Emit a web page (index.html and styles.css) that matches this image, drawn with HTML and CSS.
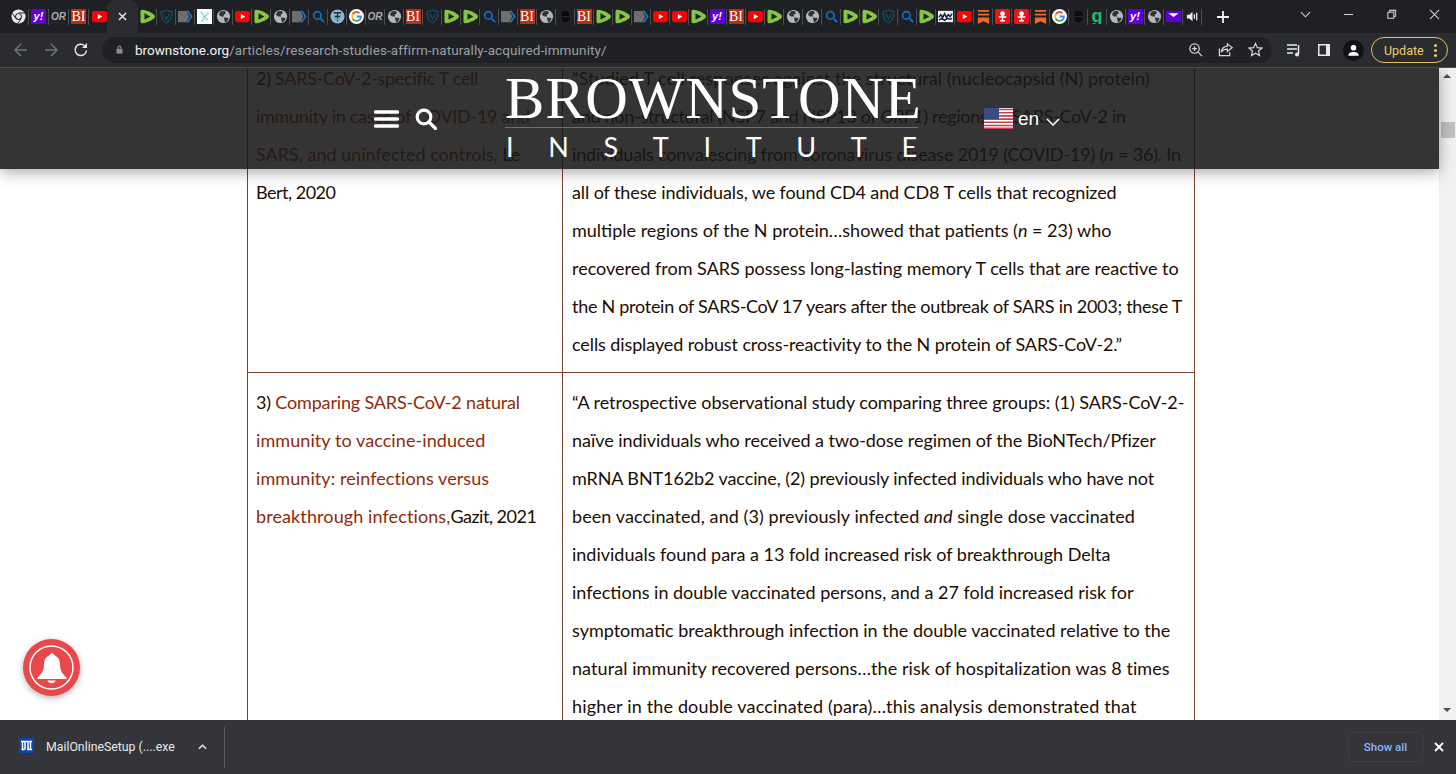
FILE: index.html
```html
<!DOCTYPE html>
<html lang="en">
<head>
<meta charset="utf-8">
<title>Research Studies Affirm Naturally Acquired Immunity</title>
<link rel="stylesheet" href="styles.css">
</head>
<body>
<svg class="defs" width="0" height="0" aria-hidden="true">
  <symbol id="chrome" viewBox="0 0 16 16"><circle cx="8" cy="8" r="7.5" fill="#e8eaed"/><circle cx="8" cy="8" r="3.6" fill="#202124"/><circle cx="8" cy="8" r="2.6" fill="#e8eaed"/><path d="M8 4.2H15M5 10 1.5 4.5M10.8 10.5 7 15.5" stroke="#202124" stroke-width="1"/></symbol>
  <symbol id="yt" viewBox="0 0 16 16"><rect y="2" width="16" height="12" rx="2.500" fill="#f00"/><path d="M6.200 5.200 11 8l-4.800 2.800z" fill="#fff"/></symbol>
  <symbol id="rumble" viewBox="0 0 16 16"><path d="M2.500 .8C1.500 .8.500 1.500.500 2.800v10.400c0 1.300 1 2.100 2.300 2C6.500 14.800 11.500 12.800 14.800 10.200c1.500-1.200 1.500-3.200 0-4.400C11.500 3.200 6.500 1 2.500.8z" fill="#85c742"/><path d="M4.800 4.600 11 8l-6.200 3.400z" fill="#202124"/></symbol>
  <symbol id="shield" viewBox="0 0 16 16"><path d="M2 3c2 0 3.500-.5 6-2 2.500 1.500 4 2 6 2 0 5.500-2 9.500-6 12C4 12.500 2 8.500 2 3z" fill="none" stroke="#14506b" stroke-width="1.300"/><path d="M5 5l3 6 3-6" fill="none" stroke="#14506b" stroke-width="1.100"/></symbol>
  <symbol id="tag" viewBox="0 0 16 16"><path d="M0 2h9l3 6-3 6H0z" fill="#6c6e72"/><path d="M10 1.500 14.500 8 10 14.500" fill="none" stroke="#1a73c9" stroke-width="1.800"/></symbol>
  <symbol id="cross" viewBox="0 0 16 16"><rect width="16" height="16" fill="#fff"/><path d="M4 3l8 10M12 4 5 13" stroke="#71cfc4" stroke-width="2" stroke-dasharray="1.500 1"/></symbol>
  <symbol id="globe" viewBox="0 0 16 16"><circle cx="8" cy="8" r="7" fill="#b4b8bd"/><path d="M5 2.500 9.500 2l1 2.500L8 6.500 8.800 8 5.500 8 3 6zM8.500 9l5 .5L12 13l-2.500 1.500z" fill="#303134"/></symbol>
  <symbol id="search" viewBox="0 0 16 16"><circle cx="6.800" cy="6.800" r="4" fill="none" stroke="#0f71c9" stroke-width="1.800"/><path d="m10 10 4 4" stroke="#0f71c9" stroke-width="2"/></symbol>
  <symbol id="tglobe" viewBox="0 0 16 16"><circle cx="8" cy="8" r="7.500" fill="#8ab4d8"/><path d="M4 4h8M8 4v9M5 8h6" stroke="#1e3a2a" stroke-width="1.400"/><path d="M5 11h6" stroke="#58c26a" stroke-width="1.400"/></symbol>
  <symbol id="google" viewBox="0 0 16 16"><circle cx="8" cy="8" r="8" fill="#fff"/><path d="M4 5.600A4.800 4.800 0 0 1 11.200 4.400" fill="none" stroke="#ea4335" stroke-width="1.900"/><path d="M4 10.400a4.800 4.800 0 0 1 0-4.800" fill="none" stroke="#fbbc05" stroke-width="1.900"/><path d="M11.300 11.500A4.800 4.800 0 0 1 4 10.400" fill="none" stroke="#34a853" stroke-width="1.900"/><path d="M8.200 8h4.500a4.800 4.800 0 0 1-1.400 3.500" fill="none" stroke="#4285f4" stroke-width="1.900"/></symbol>
  <symbol id="dim" viewBox="0 0 16 16"><rect x="3" y="1" width="10" height="14" rx="5" fill="#0c0c0d" stroke="#2b2c2f"/><path d="M3.500 8h9" stroke="#2b2c2f"/></symbol>
  <symbol id="mail" viewBox="0 0 16 16"><rect y="2" width="16" height="12" fill="#5f01d1"/><path d="M2.500 4.500h11L8 8.500z" fill="#fff"/></symbol>
  <symbol id="wave" viewBox="0 0 16 16"><rect y="2" width="16" height="12" fill="#f1f3f4"/><path d="M1 9l2-3 2 3 2-4 2 4 2-3 2 2 2-3M1 12l3-2 3 2 3-2 3 1 2-1" fill="none" stroke="#12204a" stroke-width="1.600"/></symbol>
  <symbol id="mark" viewBox="0 0 16 16"><path d="M2 1h12v2H2zM2 5h12v2H2z" fill="#f26a21"/><path d="M2 9h12v7l-6-3-6 3z" fill="#f26a21"/></symbol>
  <symbol id="alert" viewBox="0 0 16 16"><rect width="16" height="16" rx="2" fill="#e8131b"/><circle cx="8" cy="5" r="2.500" fill="#fff"/><path d="M4 8.500h8M8 7v6M5.500 12.500h5" stroke="#fff" stroke-width="1.600"/></symbol>
  <symbol id="speak" viewBox="0 0 16 16"><path d="M2 6h2.500L8 3v10L4.500 10H2z" fill="#e8eaed"/><path d="M10 5.500v5M12.500 4v8" stroke="#e8eaed" stroke-width="1.400"/></symbol>
</svg>

<header class="chrome">
  <div class="tabstrip">
    <div class="tabs">
      <span class="tab lead"><svg class="fav"><use href="#chrome"/></svg></span>
      <span class="tab lead"><span class="lt yahoo">y!</span></span>
      <span class="tab lead"><span class="lt or">OR</span></span>
      <span class="tab lead"><span class="lt bi">BI</span></span>
      <span class="tab lead last"><svg class="fav"><use href="#yt"/></svg></span>
      <span class="tab-active"><svg class="tab-x" viewBox="0 0 10 10"><path d="m1 1 8 8M9 1 1 9"/></svg></span>
      <span class="tab"><svg class="fav"><use href="#rumble"/></svg></span>
      <span class="tab"><svg class="fav"><use href="#shield"/></svg></span>
      <span class="tab"><svg class="fav"><use href="#tag"/></svg></span>
      <span class="tab"><svg class="fav"><use href="#cross"/></svg></span>
      <span class="tab"><svg class="fav"><use href="#globe"/></svg></span>
      <span class="tab"><svg class="fav"><use href="#yt"/></svg></span>
      <span class="tab"><svg class="fav"><use href="#rumble"/></svg></span>
      <span class="tab"><svg class="fav"><use href="#globe"/></svg></span>
      <span class="tab"><svg class="fav"><use href="#tag"/></svg></span>
      <span class="tab"><svg class="fav"><use href="#search"/></svg></span>
      <span class="tab"><svg class="fav"><use href="#tglobe"/></svg></span>
      <span class="tab"><svg class="fav"><use href="#google"/></svg></span>
      <span class="tab"><span class="lt or">OR</span></span>
      <span class="tab"><svg class="fav"><use href="#globe"/></svg></span>
      <span class="tab"><span class="lt bi">BI</span></span>
      <span class="tab"><svg class="fav"><use href="#shield"/></svg></span>
      <span class="tab"><svg class="fav"><use href="#rumble"/></svg></span>
      <span class="tab"><svg class="fav"><use href="#rumble"/></svg></span>
      <span class="tab"><svg class="fav"><use href="#search"/></svg></span>
      <span class="tab"><svg class="fav"><use href="#tag"/></svg></span>
      <span class="tab"><span class="lt bi">BI</span></span>
      <span class="tab"><svg class="fav"><use href="#globe"/></svg></span>
      <span class="tab"><svg class="fav"><use href="#dim"/></svg></span>
      <span class="tab"><span class="lt bi">BI</span></span>
      <span class="tab"><svg class="fav"><use href="#rumble"/></svg></span>
      <span class="tab"><svg class="fav"><use href="#rumble"/></svg></span>
      <span class="tab"><svg class="fav"><use href="#tag"/></svg></span>
      <span class="tab"><svg class="fav"><use href="#yt"/></svg></span>
      <span class="tab"><svg class="fav"><use href="#yt"/></svg></span>
      <span class="tab"><svg class="fav"><use href="#rumble"/></svg></span>
      <span class="tab"><span class="lt yahoo">y!</span></span>
      <span class="tab"><span class="lt bi">BI</span></span>
      <span class="tab"><svg class="fav"><use href="#yt"/></svg></span>
      <span class="tab"><svg class="fav"><use href="#rumble"/></svg></span>
      <span class="tab"><svg class="fav"><use href="#globe"/></svg></span>
      <span class="tab"><svg class="fav"><use href="#globe"/></svg></span>
      <span class="tab"><svg class="fav"><use href="#search"/></svg></span>
      <span class="tab"><svg class="fav"><use href="#rumble"/></svg></span>
      <span class="tab"><svg class="fav"><use href="#rumble"/></svg></span>
      <span class="tab"><svg class="fav"><use href="#shield"/></svg></span>
      <span class="tab"><svg class="fav"><use href="#search"/></svg></span>
      <span class="tab"><svg class="fav"><use href="#rumble"/></svg></span>
      <span class="tab"><svg class="fav"><use href="#wave"/></svg></span>
      <span class="tab"><svg class="fav"><use href="#yt"/></svg></span>
      <span class="tab"><svg class="fav"><use href="#mark"/></svg></span>
      <span class="tab"><svg class="fav"><use href="#alert"/></svg></span>
      <span class="tab"><svg class="fav"><use href="#alert"/></svg></span>
      <span class="tab"><svg class="fav"><use href="#mark"/></svg></span>
      <span class="tab"><svg class="fav"><use href="#google"/></svg></span>
      <span class="tab"><svg class="fav"><use href="#dim"/></svg></span>
      <span class="tab"><span class="lt gram">g</span></span>
      <span class="tab"><svg class="fav"><use href="#globe"/></svg></span>
      <span class="tab"><span class="lt yahoo">y!</span></span>
      <span class="tab"><svg class="fav"><use href="#globe"/></svg></span>
      <span class="tab"><svg class="fav"><use href="#mail"/></svg></span>
      <span class="tab"><svg class="fav"><use href="#speak"/></svg></span>
      <svg class="newtab" viewBox="0 0 12 12"><path d="M6 0v12M0 6h12"/></svg>
    </div>
    <div class="winctl">
      <svg class="win-ico" viewBox="0 0 12 12"><path d="m1 3.500 5 5 5-5"/></svg>
      <svg class="win-ico" viewBox="0 0 12 12"><path d="M1 6h10"/></svg>
      <svg class="win-ico" viewBox="0 0 12 12"><path d="M2 3.500h6.500V10H2zM4 3.500V1.500h6.500V8H8.500"/></svg>
      <svg class="win-ico" viewBox="0 0 12 12"><path d="m1 1 10 10M11 1 1 11"/></svg>
    </div>
  </div>
  <div class="toolbar">
    <svg class="nav dim" viewBox="0 0 16 16"><path d="M14 8H2M8 2 2 8l6 6"/></svg>
    <svg class="nav dim" viewBox="0 0 16 16"><path d="M2 8h12M8 2l6 6-6 6"/></svg>
    <svg class="nav" viewBox="0 0 16 16"><path d="M13.500 8.500A5.700 5.700 0 1 1 11.500 3.500"/><path class="fill" d="M14 1v5H9z"/></svg>
    <div class="omnibox">
      <svg class="lock" viewBox="0 0 12 12"><path d="M2 5h8v6.500H2z"/><path class="ring" d="M4 5V3.500a2 2 0 0 1 4 0V5"/></svg>
      <span class="url"><b>brownstone.org</b>/articles/research-studies-affirm-naturally-acquired-immunity/</span>
      <span class="omni-spacer"></span>
      <svg class="omni-ico" viewBox="0 0 16 16"><circle cx="7" cy="7" r="5"/><path d="m11 11 4 4M7 4.500v5M4.500 7h5"/></svg>
      <svg class="omni-ico" viewBox="0 0 16 16"><path d="M10 2l5 4-5 4V7.500C6.500 7.500 4.500 9 3.500 11 3.800 7.500 6 5 10 4.500zM1.500 7v7.500h11V11"/></svg>
      <svg class="omni-ico" viewBox="0 0 16 16"><path d="m8 1.500 2 4.500 4.800.5-3.600 3.200 1 4.800L8 12l-4.200 2.500 1-4.800L1.200 6.500 6 6z"/></svg>
    </div>
    <svg class="tool-ico" viewBox="0 0 16 16"><path class="s" d="M1 3h10M1 7h10M1 11h6"/><path class="s" d="M12.500 3v9"/><circle class="f" cx="11" cy="12.500" r="2"/></svg>
    <svg class="tool-ico" viewBox="0 0 16 16"><rect class="f" x="2" y="2" width="12" height="12"/><rect x="3.500" y="3.500" width="6.500" height="9" fill="#2b2c30"/></svg>
    <span class="avatar"><svg viewBox="0 0 16 16"><circle cx="8" cy="5" r="3" fill="#fff"/><path d="M2.500 13.500c0-3 2.500-4 5.500-4s5.500 1 5.500 4z" fill="#fff"/></svg></span>
    <span class="update">Update<span class="dots"><i></i><i></i><i></i></span></span>
  </div>
</header>

<main class="viewport">
  <div class="site-header">
    <svg class="burger" viewBox="0 0 25 18"><path d="M1.500 2h22M1.500 9h22M1.500 16h22"/></svg>
    <svg class="magnify" viewBox="0 0 22 22"><circle cx="9" cy="9" r="6.800"/><path d="m14 14 6.500 6.500"/></svg>
    <div class="logo">
      <div class="logo-top">BROWNSTONE</div>
      <div class="logo-sub"><span>I</span><span>N</span><span>S</span><span>T</span><span>I</span><span>T</span><span>U</span><span>T</span><span>E</span></div>
    </div>
    <svg class="flag" viewBox="0 0 29 21">
      <rect width="29" height="21" fill="#fff"/>
      <path d="M0 1.500h29M0 4.700h29M0 7.900h29M0 11.100h29M0 14.300h29M0 17.500h29M0 20.300h29" stroke="#c5404e" stroke-width="1.600"/>
      <rect width="15" height="11" fill="#3c4a86"/>
    </svg>
    <span class="lang">en</span>
    <svg class="lang-chev" viewBox="0 0 14 8"><path d="m1 1 6 6 6-6"/></svg>
  </div>

  <div class="article">
    <table class="studies">
      <tr>
        <td class="c1"><span class="ln n3">2) <a>SARS-CoV-2-specific T cell</a></span><span class="ln n3"><a>immunity in cases of COVID-19 and</a></span><span class="ln"><a>SARS, and uninfected controls,</a> Le</span><span class="ln n4">Bert, 2020</span></td>
        <td class="c2"><span class="ln p1">“Studied T cell responses against the structural (nucleocapsid (N) protein)</span><span class="ln n3">and non-structural (NSP7 and NSP13 of <i>ORF1</i>) regions of SARS-CoV-2 in</span><span class="ln n2">individuals convalescing from coronavirus disease 2019 (COVID-19) (<i>n</i> = 36). In</span><span class="ln n1">all of these individuals, we found CD4 and CD8 T cells that recognized</span><span class="ln">multiple regions of the N protein…showed that patients (<i>n</i> = 23) who</span><span class="ln">recovered from SARS possess long-lasting memory T cells that are reactive to</span><span class="ln n3">the N protein of SARS-CoV 17 years after the outbreak of SARS in 2003; these T</span><span class="ln n1">cells displayed robust cross-reactivity to the N protein of SARS-CoV-2.”</span></td>
      </tr>
      <tr>
        <td class="c1"><span class="ln n2">3) <a>Comparing SARS-CoV-2 natural</a></span><span class="ln p1"><a>immunity to vaccine-induced</a></span><span class="ln p1"><a>immunity: reinfections versus</a></span><span class="ln n4"><a class="p3">breakthrough infections,</a>Gazit, 2021</span></td>
        <td class="c2"><span class="ln n0">“A retrospective observational study comparing three groups: (1) SARS-CoV-2-</span><span class="ln n0">naïve individuals who received a two-dose regimen of the BioNTech/Pfizer</span><span class="ln n1">mRNA BNT162b2 vaccine, (2) previously infected individuals who have not</span><span class="ln p1">been vaccinated, and (3) previously infected <i>and</i> single dose vaccinated</span><span class="ln">individuals found para a 13 fold increased risk of breakthrough Delta</span><span class="ln">infections in double vaccinated persons, and a 27 fold increased risk for</span><span class="ln">symptomatic breakthrough infection in the double vaccinated relative to the</span><span class="ln p1">natural immunity recovered persons…the risk of hospitalization was 8 times</span><span class="ln p2">higher in the double vaccinated (para)…this analysis demonstrated that</span><span class="ln">natural immunity</span></td>
      </tr>
    </table>
  </div>

  <div class="scrollbar">
    <span class="arrow up"></span>
    <span class="thumb"></span>
    <span class="arrow down"></span>
  </div>

  <div class="bell">
    <svg viewBox="0 0 57 57"><circle cx="28.500" cy="28.500" r="21.500" class="bell-ring"/><path class="bell-body" d="M28.500 14c1.500 0 2.500 1 2.500 2.200 4.500 1.300 6 5 6 9.800 0 5 2 8.500 6.500 12.500v1.500h-29v-1.500c4.500-4 6.500-7.500 6.500-12.500 0-4.800 1.500-8.500 6-9.800 0-1.200 1-2.200 2.500-2.200z"/><path class="bell-body" d="M24.500 41.500h8c-.5 1.800-2 2.800-4 2.800s-3.500-1-4-2.800z"/></svg>
  </div>
</main>

<footer class="downloads">
  <svg class="dl-file" viewBox="0 0 15 15"><rect width="15" height="15" fill="#0a47a8"/><path d="M2 3.500h11M3.500 3.500v8M6 3.500v8M9 3.500v8M11.500 3.500v8M2.500 11.500h3M8 11.500h5" stroke="#fff" stroke-width="1.500"/></svg>
  <span class="dl-name">MailOnlineSetup (....exe</span>
  <svg class="dl-chev" viewBox="0 0 10 6"><path d="m1 5 4-4 4 4"/></svg>
  <span class="dl-sep"></span>
  <span class="dl-spacer"></span>
  <span class="dl-all">Show all</span>
  <svg class="dl-close" viewBox="0 0 10 10"><path d="m1 1 8 8M9 1 1 9"/></svg>
</footer>
</body>
</html>
```

FILE: styles.css
```css
* { box-sizing: border-box; }
html, body { margin: 0; padding: 0; height: 100%; overflow: hidden; }
body { width: 1456px; height: 774px; display: flex; flex-direction: column; font-family: "Liberation Sans", Arial, sans-serif; background: #fff; }
.defs { position: absolute; }

/* Browser chrome */
.chrome { flex: none; height: 68px; display: flex; flex-direction: column; background: #202124; border-bottom: 1px solid #4a4b4f; }
.tabstrip { height: 33px; display: flex; justify-content: space-between; background: #1f2024; }
.tabs { display: flex; align-items: center; padding-left: 9px; }
.tab { width: 19px; height: 16px; display: flex; align-items: center; justify-content: center; border-right: 1px solid #4c4d50; flex: none; }
.tab.lead { width: 20px; }
.tab.last { border-right: 0; }
.fav { width: 15px; height: 15px; display: block; }
.lt { width: 15px; height: 15px; display: flex; align-items: center; justify-content: center; flex: none; white-space: nowrap; overflow: hidden; }
.yahoo { background: #5f01d1; color: #fff; font: italic 700 11px/15px "Liberation Sans", sans-serif; }
.or { background: #232427; color: #a9aaac; font: italic 700 10px/15px "Liberation Sans", sans-serif; }
.bi { background: #b92e14; color: #fff; font: 400 14px/15px "Liberation Serif", serif; }
.gram { color: #15c16b; font: 700 18px/13px "Liberation Sans", sans-serif; }
.tab-active { width: 31px; height: 33px; flex: none; background: #2b2c30; border-radius: 8px 8px 0 0; display: flex; align-items: center; justify-content: center; margin-left: -2px; align-self: flex-end; }
.tab-x { width: 9px; height: 9px; stroke: #e8eaed; stroke-width: 1.600; fill: none; }
.newtab { width: 12px; height: 12px; margin-left: 15px; stroke: #f1f3f4; stroke-width: 1.800; fill: none; flex: none; }
.winctl { display: flex; align-items: center; gap: 32px; padding: 0 16px 4px 0; }
.win-ico { width: 11px; height: 11px; stroke: #d4d5d7; stroke-width: 1.100; fill: none; }

.toolbar { height: 34px; display: flex; align-items: center; background: #2b2c30; padding: 0 8px 0 13px; flex: none; }
.nav { width: 16px; height: 16px; stroke: #e8eaed; stroke-width: 1.500; fill: none; margin-right: 14px; flex: none; }
.nav.dim { stroke: #6f7276; }
.nav .fill { fill: #e8eaed; stroke: none; }
.omnibox { width: 1170px; margin-left: -1px; height: 26px; border-radius: 13px; background: #202124; display: flex; align-items: center; padding-left: 9px; padding-right: 9px; flex: none; margin-top: -1px; }
.lock { width: 9px; height: 11px; flex: none; fill: #8a8c90; margin-left: 4px; }
.lock .ring { fill: none; stroke: #8a8c90; stroke-width: 1.400; }
.url { margin-left: 11px; font: 13.500px "Roboto", "Liberation Sans", sans-serif; letter-spacing: .1px; color: #9aa0a6; white-space: nowrap; }
.url b { font-weight: 400; color: #f1f3f4; letter-spacing: 0; }
.omni-spacer { flex: 1; }
.omni-ico { width: 15px; height: 15px; stroke: #d5d7da; stroke-width: 1.300; fill: none; margin-left: 15px; flex: none; }
.tool-ico { width: 16px; height: 16px; margin-left: 14px; flex: none; }
.tool-ico .s { stroke: #e8eaed; stroke-width: 1.500; fill: none; }
.tool-ico .f { fill: #e8eaed; }
.avatar { width: 21px; height: 21px; border-radius: 50%; background: #111214; display: flex; align-items: center; justify-content: center; margin-left: 11px; flex: none; }
.avatar svg { width: 15px; height: 15px; }
.update { width: 77px; height: 26px; border: 1px solid #e5c054; border-radius: 13px; margin-left: 7px; display: flex; align-items: center; padding-left: 12px; color: #f0cc62; font: 12.500px "Roboto", "Liberation Sans", sans-serif; justify-content: space-between; padding-right: 10px; flex: none; }
.dots { display: flex; flex-direction: column; gap: 2px; }
.dots i { width: 3px; height: 3px; border-radius: 50%; background: #f0cc62; display: block; }

/* Page */
.viewport { position: relative; flex: 1; min-height: 0; overflow: hidden; background: #fff; }
.article { padding-left: 247px; margin-top: -20px; }
.studies { width: 948px; border-collapse: collapse; table-layout: fixed; font: 18px/38px "Lato", "Noto Sans", sans-serif; color: #1c0d03; }
.studies td { border: 1px solid #7c3f2f; padding: 10px 9px 9px 9px; vertical-align: top; white-space: nowrap; }
.studies .c1 { width: 315px; padding-left: 8px; }
.studies a { color: #8f2a0c; }
.ln { display: block; }
.n0 { letter-spacing: -.04px; }
.n1 { letter-spacing: -.1px; }
.n2 { letter-spacing: -.17px; }
.n3 { letter-spacing: -.28px; }
.n4 { letter-spacing: -.5px; }
.p1 { letter-spacing: .08px; }
.p2 { letter-spacing: .16px; }
.studies a.p3 { letter-spacing: .1px; }

.site-header { position: absolute; top: 0; left: 0; width: 1439px; height: 101px; background: rgba(24, 24, 24, .88); box-shadow: 0 3px 14px rgba(0, 0, 0, .35); display: flex; align-items: center; padding-left: 374px; z-index: 2; }
.burger { width: 25px; height: 18px; stroke: #fff; stroke-width: 3.400; stroke-linecap: round; fill: none; flex: none; }
.magnify { width: 22px; height: 22px; margin-left: 16px; stroke: #fff; stroke-width: 3.200; stroke-linecap: round; fill: none; flex: none; }
.logo { width: 413px; margin-left: 68px; flex: none; display: flex; flex-direction: column; color: #fff; }
.logo-top { font: 59px/52px "Liberation Serif", "Times New Roman", serif; text-align: center; white-space: nowrap; border-bottom: 1px solid #c8501a; height: 56px; letter-spacing: .8px; }
.logo-sub { display: flex; justify-content: space-between; font: 27px/37px "Lato", "Noto Sans", sans-serif; padding: 0 1px; }
.flag { width: 29px; height: 21px; margin-left: 66px; flex: none; }
.lang { font: 19px "Liberation Sans", Arial, sans-serif; color: #fff; margin-left: 5px; }
.lang-chev { width: 14px; height: 8px; margin-left: 7px; margin-top: 6px; stroke: #fff; stroke-width: 1.500; fill: none; flex: none; }

.scrollbar { position: absolute; top: 0; right: 0; bottom: 0; width: 17px; background: #f1f1f1; z-index: 1; }
.arrow { position: absolute; left: 4px; width: 0; height: 0; border-left: 4px solid transparent; border-right: 4px solid transparent; }
.arrow.up { top: 6px; border-bottom: 4px solid #505050; }
.arrow.down { bottom: 8px; border-top: 4px solid #505050; }
.thumb { position: absolute; left: 2px; right: 1px; top: 54px; height: 16px; background: #c1c1c1; }

.bell { position: absolute; left: 23px; top: 571px; width: 57px; height: 57px; border-radius: 50%; background: #e8474b; box-shadow: 0 2px 6px rgba(0, 0, 0, .3); z-index: 3; }
.bell svg { width: 57px; height: 57px; display: block; }
.bell-ring { fill: none; stroke: #fff; stroke-width: 1.500; }
.bell-body { fill: #fff; }

/* Download shelf */
.downloads { flex: none; height: 54px; background: #33353a; display: flex; align-items: center; padding-left: 19px; color: #e8eaed; }
.dl-file { width: 15px; height: 15px; flex: none; margin-top: -3px; }
.dl-name { font: 12.300px "Roboto", "Liberation Sans", sans-serif; margin-left: 12px; white-space: nowrap; }
.dl-chev { width: 9px; height: 6px; margin-left: 23px; stroke: #e8eaed; stroke-width: 1.600; fill: none; flex: none; }
.dl-sep { width: 1px; height: 41px; background: #5c5e62; margin-left: 17px; flex: none; }
.dl-spacer { flex: 1; }
.dl-all { width: 75px; height: 30px; border: 1px solid #3d3f44; border-radius: 4px; color: #8ab4f8; font: 500 11.500px/28px "Roboto", "Liberation Sans", sans-serif; text-align: center; flex: none; }
.dl-close { width: 10px; height: 10px; margin-left: 11px; margin-right: 12px; stroke: #fff; stroke-width: 1.800; fill: none; flex: none; }
```
